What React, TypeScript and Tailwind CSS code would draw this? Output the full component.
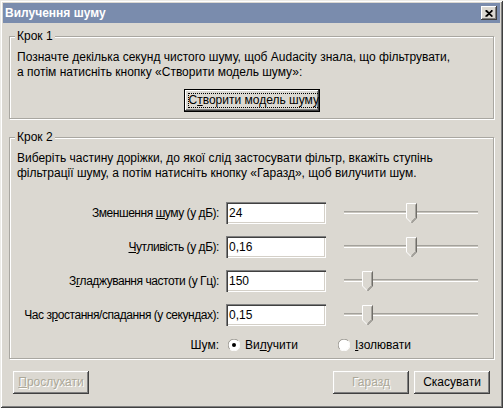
import type { ReactNode } from 'react';

const RAISED =
  'shadow-[inset_-1px_-1px_0_#404040,inset_1px_1px_0_#ffffff,inset_-2px_-2px_0_#808080,inset_2px_2px_0_#dcdad5]';
const SUNKEN =
  'shadow-[inset_1px_1px_0_#808080,inset_2px_2px_0_#404040,inset_-1px_-1px_0_#ffffff,inset_-2px_-2px_0_#d4d0c8]';

function GroupBox({ title, className, children }: { title: string; className?: string; children: ReactNode }) {
  return (
    <div
      className={`relative mx-[6px] border border-[#a9a7a1] shadow-[1px_1px_0_#ffffff,inset_1px_1px_0_#ffffff] ${className ?? ''}`}
    >
      <span className="absolute -top-[8px] left-[5px] bg-[#dbd8d1] px-[2px] leading-[15px]">{title}</span>
      {children}
    </div>
  );
}

function Slider({ pos }: { pos: number }) {
  return (
    <div className="relative ml-[18px] h-full w-[134px]">
      <div className="absolute left-0 right-0 top-[15px] h-[3px] border-t border-b border-t-[#a3a19b] border-b-white bg-[#c9c6bf]" />
      <svg className="absolute top-[7px]" style={{ left: pos }} width="12" height="21" viewBox="0 0 12 21">
        <polygon points="0.5,0.5 10.5,0.5 10.5,15 5.5,20 0.5,15" fill="#dbd8d1" />
        <polyline points="0.5,15 0.5,0.5 10,0.5" fill="none" stroke="#ffffff" />
        <polyline points="0.5,15 5,19.5" fill="none" stroke="#ffffff" />
        <polyline points="10.5,0.5 10.5,15 5.5,20" fill="none" stroke="#6f6d68" />
        <polyline points="9.5,1.5 9.5,14.6 5.5,18.6" fill="none" stroke="#a3a19b" />
      </svg>
    </div>
  );
}

function Row({ label, value, pos }: { label: ReactNode; value: string; pos: number }) {
  return (
    <div className="flex h-[34px] items-center">
      <div className="w-[202px] whitespace-nowrap text-right tracking-[-0.45px]">{label}</div>
      <div className={`ml-[7px] flex h-[22px] w-[100px] items-center bg-white pl-[3px] ${SUNKEN}`}>{value}</div>
      <Slider pos={pos} />
    </div>
  );
}

function Radio({ checked }: { checked?: boolean }) {
  return (
    <svg width="12" height="12" viewBox="0 0 12 12">
      <circle cx="6" cy="6" r="5.5" fill="#ffffff" />
      <path d="M1.8 10.2 A5.5 5.5 0 0 1 10.2 1.8" fill="none" stroke="#9a9892" />
      <path d="M10.2 1.8 A5.5 5.5 0 0 1 1.8 10.2" fill="none" stroke="#ffffff" />
      {checked && <circle cx="6" cy="6" r="2" fill="#000000" />}
    </svg>
  );
}

function Button({ children, disabled, className }: { children: ReactNode; disabled?: boolean; className?: string }) {
  return (
    <div
      className={`flex h-[23px] w-[76px] items-center justify-center bg-[#dbd8d1] ${RAISED} ${
        disabled ? 'text-[#aca899] [text-shadow:1px_1px_0_#ffffff]' : 'text-black'
      } ${className ?? ''}`}
    >
      {children}
    </div>
  );
}

export default function App() {
  return (
    <div className="h-[408px] w-[503px] bg-[#dbd8d1] font-['Liberation_Sans',sans-serif] text-[12px] leading-[15px] text-black shadow-[inset_1px_1px_0_#ecebe7,inset_-1px_-1px_0_#404040,inset_2px_2px_0_#ffffff,inset_-2px_-2px_0_#808080]">
      <div className="px-[3px] pt-[3px]">
        <div className="flex h-[20px] items-center justify-between bg-[#7a8cad] pl-[2px] pr-[3px]">
          <span className="text-[12px] font-bold text-white">Вилучення шуму</span>
          <div className={`flex h-[14px] w-[16px] items-center justify-center bg-[#dbd8d1] ${RAISED}`}>
            <svg width="8" height="7" viewBox="0 0 8 7">
              <path d="M0.5 0.5 L7 6.5 M1.5 0.5 L7.5 6.5 M7 0.5 L0.5 6.5 M7.5 0.5 L1.5 6.5" stroke="#000" strokeWidth="1.3" />
            </svg>
          </div>
        </div>

        <GroupBox title="Крок 1" className="mt-[13px] pb-[6px] pl-[7px] pt-[13px]">
          <p className="whitespace-nowrap">Позначте декілька секунд чистого шуму, щоб Audacity знала, що фільтрувати,</p>
          <p className="whitespace-nowrap">а потім натисніть кнопку «Створити модель шуму»:</p>
          <div className="mt-[9px] flex justify-center pr-[7px]">
            <div className={`flex h-[23px] w-[136px] border border-black bg-[#dbd8d1] ${RAISED}`}>
              <div className="m-[3px] flex flex-1 items-center justify-center whitespace-nowrap border border-dotted border-black">
                <span>
                  С<span className="underline">т</span>ворити модель шуму
                </span>
              </div>
            </div>
          </div>
        </GroupBox>

        <GroupBox title="Крок 2" className="mt-[18px] pl-[7px] pt-[13px]">
          <p className="whitespace-nowrap">Виберіть частину доріжки, до якої слід застосувати фільтр, вкажіть ступінь</p>
          <p className="whitespace-nowrap">фільтрації шуму, а потім натисніть кнопку «Гаразд», щоб вилучити шум.</p>
          <div className="mt-[15px]">
            <Row
              label={
                <>
                  Зменшення <span className="underline">ш</span>уму (у дБ):
                </>
              }
              value="24"
              pos={62}
            />
            <Row
              label={
                <>
                  <span className="underline">Ч</span>утливість (у дБ):
                </>
              }
              value="0,16"
              pos={62}
            />
            <Row
              label={
                <>
                  З<span className="underline">г</span>ладжування частоти (у Гц):
                </>
              }
              value="150"
              pos={18}
            />
            <Row
              label={
                <>
                  Час з<span className="underline">р</span>остання/спадання (у секундах):
                </>
              }
              value="0,15"
              pos={18}
            />
          </div>
          <div className="flex h-[26px] items-center">
            <div className="w-[202px] text-right">Шум:</div>
            <div className="ml-[9px] flex w-[110px] items-center gap-[5px]">
              <Radio checked />
              <span>
                Ви<span className="underline">л</span>учити
              </span>
            </div>
            <div className="flex items-center gap-[5px]">
              <Radio />
              <span>
                <span className="underline">І</span>золювати
              </span>
            </div>
          </div>
        </GroupBox>

        <div className="mt-[12px] flex items-center px-[10px]">
          <Button disabled>
            <span>
              <span className="underline">П</span>рослухати
            </span>
          </Button>
          <Button disabled className="ml-auto">
            Гаразд
          </Button>
          <Button className="ml-[5px]">Скасувати</Button>
        </div>
      </div>
    </div>
  );
}
